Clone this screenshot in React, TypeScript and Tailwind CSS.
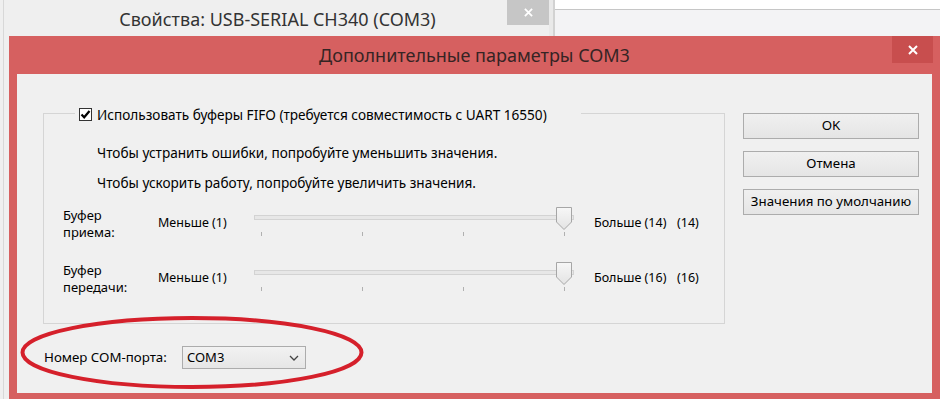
import React from "react";

const ui = "font-['Noto_Sans',sans-serif]";
const seg = "font-['Noto_Sans',sans-serif]";

function Thumb() {
  return (
    <svg width="17" height="24" viewBox="0 0 17 24" className="absolute left-[302px] top-0">
      <defs>
        <linearGradient id="thumbFill" x1="0" y1="0" x2="0" y2="1">
          <stop offset="0" stopColor="#f7f7f7" />
          <stop offset="1" stopColor="#e3e3e3" />
        </linearGradient>
      </defs>
      <path d="M0.5 0.5H15.5V15L8 22.5L0.5 15Z" fill="url(#thumbFill)" stroke="#a6a6a6" />
    </svg>
  );
}

function Slider() {
  return (
    <div className="relative w-[320px] h-[30px]">
      <div className="mt-[8px] h-[5px] w-[320px] border border-[#d3d3d3] bg-[#e7e7e7]" />
      <div className="mt-[12px] flex gap-[100px] pl-[7px]">
        {[0, 1, 2, 3].map((i) => (
          <div key={i} className="w-px h-[4px] bg-[#b0b0b0]" />
        ))}
      </div>
      <Thumb />
    </div>
  );
}

function SliderRow({ l1, l2, max, className = "" }: { l1: string; l2: string; max: number; className?: string }) {
  return (
    <div className={`flex h-[34px] ${className}`}>
      <div className="w-[95px] ml-[19px]">
        <div>{l1}</div>
        <div>{l2}</div>
      </div>
      <div className="w-[96px] pt-[7px] text-[12.5px]">Меньше (1)</div>
      <Slider />
      <div className="ml-[20px] pt-[7px] flex text-[12.5px]">
        <span className="w-[83px]">Больше ({max})</span>
        <span>({max})</span>
      </div>
    </div>
  );
}

function Btn({ children }: { children: React.ReactNode }) {
  return (
    <button className="h-[26px] w-[176px] border border-[#acacac] bg-gradient-to-b from-[#f0f0f0] to-[#e5e5e5] text-black text-[13.3px] leading-none">
      {children}
    </button>
  );
}

function XIcon({ size = 10 }: { size?: number }) {
  return (
    <svg width={size} height={size} viewBox="0 0 10 10">
      <path d="M1 1L9 9M9 1L1 9" stroke="#fff" strokeWidth="2" />
    </svg>
  );
}

export default function App() {
  return (
    <div className="relative w-[940px] h-[399px] overflow-hidden bg-[#efefef] flex">
      {/* parent window edge */}
      <div className="w-[9px] h-full pl-[3px]">
        <div className="h-full border-l border-[#d8d8d8]" />
      </div>

      <div className="w-[931px] flex flex-col">
        {/* parent window title strip */}
        <div className="flex h-[36px]">
          <div className="w-[546px] flex items-start">
            <div className="w-[39px]" />
            <div className={`flex-1 text-center pt-[6px] text-[18px] leading-[26px] text-[#333] ${seg}`}>
              Свойства: USB-SERIAL CH340 (COM3)
            </div>
            <div className="w-[42px] h-[25px] bg-[#c6c6c6] flex items-center justify-center">
              <XIcon size={9} />
            </div>
            <div className="w-[4px] h-full bg-[#e9e9e9]" />
            <div className="w-[2px] h-full bg-[#d2d2d2]" />
          </div>
          <div className="flex-1 flex flex-col">
            <div className="h-[10px] bg-white border-b border-[#c6c6c6]" />
            <div className="flex-1 bg-[#f3f3f5]" />
          </div>
        </div>

        {/* dialog */}
        <div className="flex-1 bg-[#d66060] flex flex-col">
          <div className="h-[38px] grid grid-cols-[48px_1fr_48px]">
            <div />
            <div className={`text-center pt-[6px] text-[18px] leading-[26px] text-[#352424] ${seg}`}>
              Дополнительные параметры COM3
            </div>
            <div className="w-[41px] h-[27px] bg-[#c84e4e] flex items-center justify-center">
              <XIcon size={10} />
            </div>
          </div>

          <div className={`mx-[8px] h-[319px] bg-[#f0f0f0] pl-[26px] pt-[39px] text-[13px] leading-[17px] text-black ${ui}`}>
            <div className="flex">
              <div className="w-[682px] h-[211px] border border-[#d5d5d5] flex flex-col">
                <div className="-mt-[7px] ml-[31px] self-start flex items-center h-[14px] bg-[#f0f0f0] pl-[4px] pr-[34px]">
                  <div className="w-[13px] h-[13px] border border-[#333] bg-white flex items-center justify-center">
                    <svg width="11" height="11" viewBox="0 0 11 11">
                      <path d="M1.5 5.5L4.2 8.3L9.5 2" stroke="#000" strokeWidth="2.2" fill="none" />
                    </svg>
                  </div>
                  <span className="ml-[5px] text-[13.6px]">Использовать буферы FIFO (требуется совместимость с UART 16550)</span>
                </div>
                <div className="mt-[23px] ml-[53px] text-[13.6px]">Чтобы устранить ошибки, попробуйте уменьшить значения.</div>
                <div className="mt-[13px] ml-[53px] text-[13.6px]">Чтобы ускорить работу, попробуйте увеличить значения.</div>
                <SliderRow className="mt-[16px]" l1="Буфер" l2="приема:" max={14} />
                <SliderRow className="mt-[21px]" l1="Буфер" l2="передачи:" max={16} />
              </div>

              <div className="ml-[18px] flex flex-col gap-[12px]">
                <Btn>OK</Btn>
                <Btn>Отмена</Btn>
                <Btn>Значения по умолчанию</Btn>
              </div>
            </div>

            <div className="mt-[22px] flex items-center h-[23px]">
              <div className="w-[139px] pl-[1px] text-[13.3px]">Номер COM-порта:</div>
              <div className="w-[124px] h-[23px] border border-[#acacac] bg-gradient-to-b from-[#f2f2f2] to-[#e6e6e6] flex items-center pl-[4px] pr-[6px]">
                <span className="flex-1">COM3</span>
                <svg width="10" height="6" viewBox="0 0 10 6">
                  <path d="M1 1L5 5L9 1" stroke="#444" strokeWidth="1.3" fill="none" />
                </svg>
              </div>
            </div>
          </div>
        </div>
      </div>

      {/* red hand-drawn annotation */}
      <svg width="940" height="399" className="absolute left-0 top-0 pointer-events-none">
        <ellipse cx="192" cy="352.5" rx="169.5" ry="34.5" fill="none" stroke="#d5202b" strokeWidth="4" />
      </svg>
    </div>
  );
}
